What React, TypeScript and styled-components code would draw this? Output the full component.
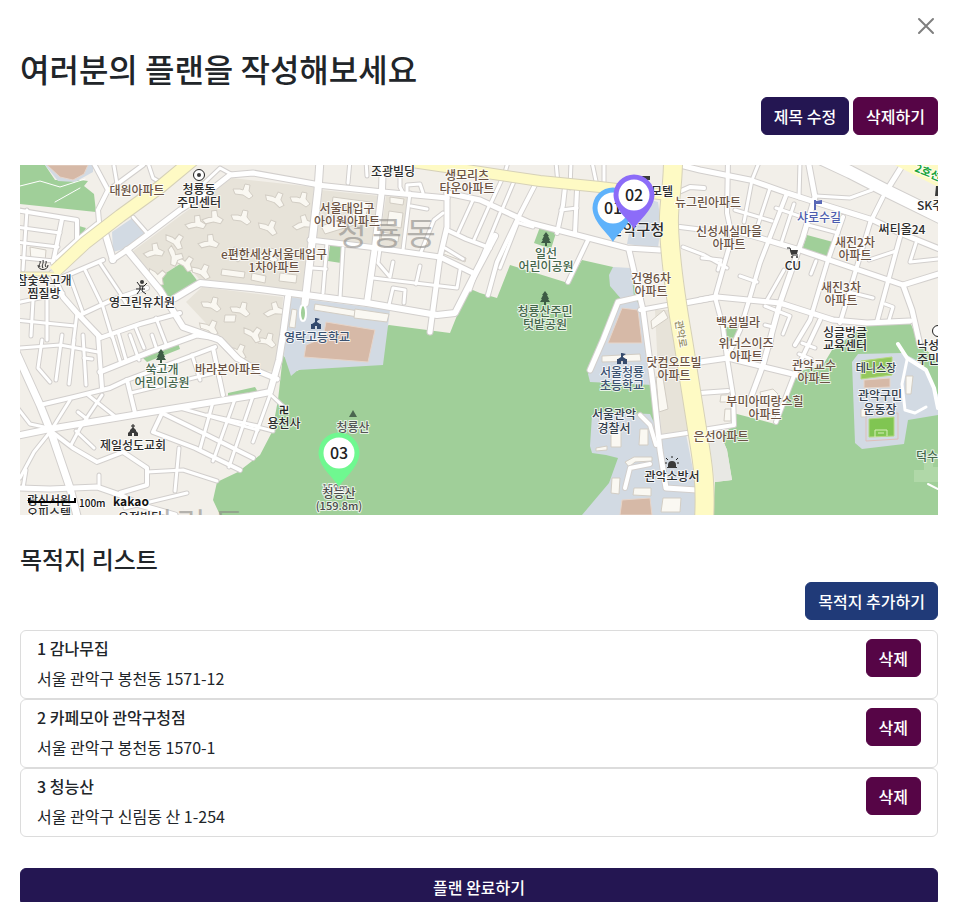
import React from "react";
import styled, { createGlobalStyle } from "styled-components";

const GlobalStyle = createGlobalStyle`
  *, *::before, *::after { box-sizing: border-box; }
  body {
    margin: 0;
    background: #fff;
    color: #212529;
    font-family: "Noto Sans CJK KR", "Noto Sans", sans-serif;
    font-size: 16px;
    line-height: 24px;
  }
  h1, h2, h3, p, ul { margin: 0; padding: 0; }
`;

const Page = styled.main`
  display: flex;
  flex-direction: column;
  padding: 14px 24px 20px 20px;
`;

const CloseBar = styled.div`
  display: flex;
  justify-content: flex-end;
  margin-bottom: 11px;
`;

const CloseButton = styled.button`
  display: grid;
  place-items: center;
  width: 24px;
  height: 24px;
  padding: 0;
  border: 0;
  background: transparent;
  color: #7f7f7f;
  cursor: pointer;
`;

const Title = styled.h1`
  margin-bottom: 2px;
  font-size: 32px;
  line-height: 38px;
  font-weight: 500;
`;

const Subtitle = styled.h2`
  margin-top: 29px;
  margin-bottom: 1px;
  font-size: 24px;
  line-height: 29px;
  font-weight: 500;
`;

const Actions = styled.div`
  display: flex;
  justify-content: flex-end;
  gap: 4px;
  margin-top: 8px;
`;

const tones = { navy: "#241652", wine: "#560546", blue: "#203a78" };

const Button = styled.button<{ $tone: keyof typeof tones }>`
  padding: 6px 12px;
  border: 1px solid ${(p) => tones[p.$tone]};
  border-radius: 6px;
  background: ${(p) => tones[p.$tone]};
  color: #fff;
  font: inherit;
  font-weight: 500;
  cursor: pointer;
`;

const MapFrame = styled.section`
  height: 350px;
  margin-top: 30px;
  overflow: hidden;
  background: #f2efe9;
`;

const MapSvg = styled.svg`
  display: block;
  width: 100%;
  height: 100%;
`;

const MapText = styled.text<{ $size?: number; $weight?: number }>`
  font-size: ${(p) => p.$size ?? 12}px;
  font-weight: ${(p) => p.$weight ?? 500};
  paint-order: stroke;
  stroke: rgba(255, 255, 255, 0.75);
  stroke-width: 2px;
  stroke-linejoin: round;
`;

const DistrictText = styled.text`
  font-size: 32px;
  fill: #8c8a86;
  opacity: 0.6;
`;

const PinText = styled.text`
  font-size: 16px;
  font-weight: 500;
  fill: #222;
`;

const PlaceList = styled.ul`
  margin-top: 10px;
  list-style: none;
`;

const PlaceItem = styled.li`
  display: flex;
  justify-content: space-between;
  align-items: flex-start;
  padding: 8px 16px;
  border: 1px solid #dcdcdc;
  border-radius: 6px;
`;

const PlaceName = styled.h3`
  margin-bottom: 8px;
  font-size: 16px;
  line-height: 19px;
  font-weight: 500;
`;

const FinishButton = styled(Button)`
  width: 100%;
  margin-top: 31px;
`;

const greens = [
  "20,165 45,165 55,180 80,180 88,181 84,186 94,194 96,212 20,204",
  "79,226 86,228 80,238 77,240",
  "152,282 183,262 199,283 175,298 163,298",
  "330,245 343,247 341,263 328,261",
  "143,358 178,343 180,349 147,362",
  "228,393 255,387 258,392 228,398",
  "807,235 833,242 828,257 802,250",
  "722,327 742,327 738,341 724,341",
  "540,227 556,233 551,249 534,243",
  "389,325 450,333 468,288 480,293 497,298 510,265 568,283 582,260 613,267 640,290 655,412 640,515 220,515 213,500 217,482 238,472 260,455 272,432 278,400 283,355 297,371",
  "733,413 775,424 797,372 823,365 832,350 865,325 910,322 920,345 938,360 938,515 713,515 715,482 732,480 727,450 721,435 735,425",
];

const grounds = [
  "45,165 93,165 93,172 75,182 58,181",
  "288,297 390,310 383,365 298,370 291,376 284,355",
  "613,267 631,268 634,297 643,310 647,340 653,385 632,384 590,382 588,374 604,340 614,306 622,300 610,286 609,275",
  "592,415 604,412 650,414 660,436 686,434 697,490 696,515 582,515 609,483 618,458 606,455 592,453 590,446",
  "852,362 858,354 903,353 920,362 938,395 938,415 908,420 904,444 862,449 855,443",
  "112,232 134,217 147,233 127,248 113,252",
  "636,196 658,202 661,224 658,248 627,244",
];

const courts = [
  "47,165 88,165 84,174 73,180 60,177",
  "326,322 375,330 368,362 304,357 306,345 323,338",
  "622,308 638,310 642,343 608,343",
  "622,500 650,498 652,515 620,515",
  "864,380 890,378 890,387 864,388",
];

const apartments = [
  "129,254 180,216 232,178 314,187 310,238 303,300 199,279 183,260 158,280",
  "186,302 202,287 283,297 279,372 252,370 218,336",
  "321,190 380,196 374,244 314,238",
  "386,196 410,198 403,248 379,245",
  "655,310 668,310 682,390 690,430 661,434",
];

type Road = [number, string];
const roads: Road[] = [
  [4, "92,160 108,190 98,210 99,222"],
  [3, "147,160 153,178 163,184"],
  [4, "109,190 143,165"],
  [3, "117,184 114,166"],
  [5, "320,185 253,173 230,175 207,193 180,210 147,235 127,250 112,260"],
  [6, "105,233 113,260"],
  [3, "133,217 147,233"],
  [3, "203,184 220,168 231,174"],
  [6, "127,250 160,290 183,327 220,340 237,358"],
  [6, "175,298 200,283 260,289 367,303 437,315 455,313 477,270 495,236"],
  [4, "16,210 77,220 77,240"],
  [3, "27,210 23,270"],
  [4, "62,219 53,263"],
  [3, "16,227 60,233"],
  [3, "16,242 58,247"],
  [3, "16,257 54,261"],
  [4, "57,258 77,240 97,224"],
  [5, "52,273 63,297 77,313 100,337"],
  [4, "63,277 103,260"],
  [3, "70,277 83,313"],
  [3, "85,270 103,307 112,337"],
  [3, "100,263 120,293 126,303"],
  [4, "80,315 112,300 147,288"],
  [4, "100,338 140,324 180,313"],
  [3, "16,303 63,293"],
  [3, "33,300 31,336"],
  [3, "47,298 47,340"],
  [3, "16,320 75,326"],
  [3, "77,313 73,345"],
  [3, "135,326 144,348"],
  [3, "156,318 166,344"],
  [3, "118,332 126,360"],
  [7, "320,160 318,190 310,260 305,303"],
  [5, "317,185 383,192 437,197 447,198"],
  [6, "383,160 382,190 375,247 367,303"],
  [3, "410,193 403,250"],
  [5, "447,193 447,227 440,257 430,332"],
  [5, "310,240 377,248 440,257 473,273"],
  [4, "447,230 466,239 490,248"],
  [3, "473,200 458,233"],
  [3, "489,206 474,240"],
  [3, "373,278 457,288 460,270"],
  [3, "380,249 378,263 390,277 393,262"],
  [3, "420,266 416,284"],
  [3, "343,248 340,298"],
  [3, "327,243 323,293"],
  [3, "312,268 326,269"],
  [3, "404,303 405,290 393,288 389,305"],
  [3, "350,160 348,183"],
  [3, "366,160 367,176"],
  [3, "407,193 407,185 420,184 423,193"],
  [3, "443,213 434,220 421,252"],
  [3, "445,248 463,259"],
  [3, "411,206 427,209"],
  [3, "400,166 400,187 403,193"],
  [5, "447,193 480,200 530,223 577,235 627,248 660,250"],
  [4, "565,187 563,205 557,233"],
  [4, "577,190 575,233"],
  [4, "536,183 517,220 497,262 488,295"],
  [3, "503,177 490,205"],
  [3, "515,179 502,210"],
  [3, "518,222 500,268"],
  [3, "500,213 480,262 470,290"],
  [4, "588,240 568,282"],
  [3, "561,210 577,208"],
  [3, "508,162 504,176"],
  [3, "556,162 558,184 570,188 571,162"],
  [3, "592,162 597,186"],
  [3, "604,162 604,187"],
  [3, "516,222 533,227"],
  [5, "629,250 643,310 653,385 660,450 666,488 697,490"],
  [5, "640,297 618,302 603,340 590,370"],
  [4, "640,310 667,305"],
  [5, "685,303 717,297"],
  [4, "660,437 687,433"],
  [4, "681,191 690,187 704,188"],
  [4, "680,227 704,230"],
  [3, "683,247 704,255 727,268"],
  [4, "640,415 650,425 656,445"],
  [4, "625,488 630,468 650,464"],
  [5, "680,165 700,170 750,180 787,193 815,202 873,220 900,233 942,250"],
  [4, "728,160 727,213 732,237 715,297 723,327 727,358"],
  [3, "760,160 752,180 744,222"],
  [4, "787,193 760,263 750,297 740,330 727,358"],
  [5, "808,160 815,197 803,237 780,303 763,365 750,400"],
  [4, "883,197 870,223"],
  [4, "843,217 828,260 810,320 795,345"],
  [4, "870,223 840,323"],
  [4, "900,237 877,322"],
  [5, "728,229 760,238 800,250 850,267 903,285 942,273"],
  [5, "700,300 717,297 780,303 833,320 867,323 910,321"],
  [5, "903,285 912,310 920,345"],
  [3, "784,270 767,300"],
  [3, "740,276 757,282"],
  [3, "816,196 850,198 872,190"],
  [3, "702,258 721,260 718,270"],
  [3, "735,210 772,221"],
  [3, "770,188 755,234"],
  [3, "794,204 781,244"],
  [3, "776,208 799,216"],
  [3, "808,225 838,233"],
  [3, "816,261 811,274"],
  [3, "885,304 893,307 889,320"],
  [3, "849,292 873,298"],
  [3, "869,260 896,251"],
  [3, "916,243 910,262 938,259"],
  [3, "800,162 799,198"],
  [5, "700,362 728,358 768,368 797,375"],
  [4, "727,358 733,395 734,425 703,430"],
  [4, "820,320 795,373 776,422"],
  [4, "700,393 728,391"],
  [3, "802,343 815,348"],
  [3, "799,354 811,359"],
  [3, "765,306 790,316 783,334"],
  [3, "765,325 773,327 771,346"],
  [7, "16,352 40,405 52,435 70,488 78,520"],
  [6, "16,436 55,428 133,415 213,402 250,396 270,392 279,360 283,335 288,297"],
  [4, "40,405 74,397 110,388 127,380 170,364 215,347"],
  [4, "98,335 102,388"],
  [5, "100,372 150,352 197,335 217,338 237,358 260,372 277,379"],
  [3, "62,335 56,380"],
  [3, "83,335 86,385"],
  [3, "42,340 38,368 50,382"],
  [3, "20,348 60,345 98,352"],
  [3, "74,340 69,384"],
  [3, "84,358 92,359"],
  [3, "112,335 121,364"],
  [3, "130,335 139,360"],
  [3, "152,335 157,350"],
  [4, "127,380 135,413"],
  [3, "102,395 80,428 71,445"],
  [3, "88,395 117,418"],
  [3, "70,400 50,432"],
  [4, "52,432 73,448 97,462 123,452"],
  [3, "76,431 94,448"],
  [3, "78,412 87,419"],
  [3, "16,406 30,424 44,427"],
  [4, "123,452 147,468 147,485 120,493"],
  [3, "147,472 183,470 217,481"],
  [5, "16,488 50,489 97,487 120,495 140,505 175,515"],
  [3, "50,432 34,452 20,478"],
  [3, "179,448 175,491"],
  [3, "125,508 187,493"],
  [3, "99,475 99,487"],
  [3, "26,470 23,488"],
  [4, "162,413 153,432 195,448 240,470"],
  [4, "162,413 205,434 253,458"],
  [3, "180,408 258,430"],
  [3, "213,402 200,449"],
  [3, "235,399 213,461"],
  [3, "253,396 229,467"],
  [3, "207,415 258,426"],
  [4, "213,348 223,395"],
  [3, "192,355 200,380"],
  [3, "131,393 218,372"],
  [3, "270,395 253,442"],
  [3, "250,425 273,431"],
  [3, "270,394 285,408"],
  [12, "820,158 850,172 885,190 942,218"],
  [5, "887,190 902,166"],
];

const pathsOnGreen: Road[] = [
  [1, "20,186 40,181 60,187 85,179"],
  [1, "55,202 80,188"],
  [4, "898,344 907,358 926,370 934,388 938,408"],
  [3, "907,360 902,384 905,410 915,413 926,407"],
  [2, "928,484 938,489"],
];

const blocks: [number, number, number][] = [
  [233, 186, 0], [231, 212, 0], [201, 217, -20], [197, 241, -20], [167, 232, 20], [177, 254, 20],
  [192, 264, 10], [266, 192, 10], [290, 194, 0], [259, 220, 10], [291, 224, -30], [222, 249, 0],
  [258, 250, 0], [142, 251, -25], [151, 266, 30], [201, 299, 0], [230, 304, 0], [262, 311, -30],
  [200, 320, 10], [256, 335, 0], [228, 344, 10], [184, 222, -20], [174, 244, 60], [245, 325, 20],
];

const plainBuildings = [
  "222,269 245,272 244,278 221,275", "252,273 266,276 265,283 251,280", "225,315 236,315 235,322 224,322",
  "280,273 297,275 296,283 279,281", "390,197 404,199 403,205 390,203", "389,211 403,213 401,228 387,225",
  "333,197 370,202 364,222 325,234 321,226 352,216 354,207 332,204", "382,232 399,235 398,242 381,239",
  "292,309 297,310 295,328 289,327", "315,304 365,312 364,318 314,310", "355,309 389,314 387,322 354,318",
  "602,356 640,354 641,361 602,362", "640,429 648,429 648,445 639,445",
  "599,419 606,419 605,428 599,428", "612,478 620,478 619,494 611,493", "634,488 651,488 651,496 633,495",
  "663,498 681,498 680,512 661,512", "656,377 663,378 668,409 659,412", "651,321 664,310 668,318 652,329",
  "30,247 46,250 45,262 31,260", "596,448 607,446 607,450 596,451", "611,430 621,430 621,447 611,447",
  "625,462 634,457 652,457 652,461 635,462 629,467",
  "721,395 730,395 729,402 720,402", "725,409 731,409 731,421 724,421", "760,392 773,389 778,394 777,400 762,401",
  "906,376 913,376 911,394 906,394", "861,409 866,409 866,417 861,417", "442,250 466,258 465,262 441,253",
];

type Label = { x: number; y: number; lines: string[]; c?: string; lh?: number; size?: number; start?: boolean };
const brown = "#6b5344";
const dark = "#2c2c2c";
const park = "#45664c";
const school = "#3b5270";
const labels: Label[] = [
  { x: 137, y: 195, lines: ["대원아파트"], c: brown },
  { x: 199, y: 194, lines: ["청룡동", "주민센터"] },
  { x: 393, y: 176, lines: ["조광빌딩"] },
  { x: 467, y: 180, lines: ["생모리츠", "타운아파트"], c: brown },
  { x: 347, y: 213, lines: ["서울대입구", "아이원아파트"], c: brown },
  { x: 274, y: 259, lines: ["e편한세상서울대입구", "1차아파트"], c: brown },
  { x: 44, y: 285, lines: ["참숯쑥고개", "찜질방"] },
  { x: 142, y: 307, lines: ["영그린유치원"] },
  { x: 317, y: 342, lines: ["영락고등학교"], c: school },
  { x: 162, y: 374, lines: ["쑥고개", "어린이공원"], c: park },
  { x: 228, y: 374, lines: ["바라본아파트"], c: brown },
  { x: 284, y: 428, lines: ["용천사"] },
  { x: 353, y: 432, lines: ["청룡산"], c: "#555" },
  { x: 133, y: 450, lines: ["제일성도교회"] },
  { x: 49, y: 505, lines: ["광신서원", "오피스텔"], lh: 13, size: 12 },
  { x: 140, y: 522, lines: ["유정빌딩"] },
  { x: 546, y: 258, lines: ["일선", "어린이공원"], c: park },
  { x: 545, y: 316, lines: ["청룡산주민", "텃밭공원"], c: park },
  { x: 651, y: 283, lines: ["건영6차", "아파트"], c: brown },
  { x: 651, y: 196, lines: ["모텔"], start: true },
  { x: 622, y: 377, lines: ["서울청룡", "초등학교"], c: school },
  { x: 614, y: 419, lines: ["서울관악", "경찰서"], c: "#34404c", lh: 14 },
  { x: 674, y: 367, lines: ["닷컴오뜨빌", "아파트"], c: brown },
  { x: 672, y: 481, lines: ["관악소방서"] },
  { x: 721, y: 441, lines: ["은선아파트"], c: brown },
  { x: 708, y: 207, lines: ["뉴그린아파트"], c: brown },
  { x: 729, y: 236, lines: ["신성새실마을", "아파트"], c: brown },
  { x: 819, y: 222, lines: ["샤로수길"], c: "#4c5cae" },
  { x: 793, y: 270, lines: ["CU"] },
  { x: 855, y: 247, lines: ["새진2차", "아파트"], c: brown },
  { x: 902, y: 234, lines: ["써티올24"] },
  { x: 841, y: 292, lines: ["새진3차", "아파트"], c: brown },
  { x: 738, y: 327, lines: ["백설빌라"], c: brown },
  { x: 746, y: 348, lines: ["위너스이즈", "아파트"], c: brown },
  { x: 845, y: 337, lines: ["싱글벙글", "교육센터"] },
  { x: 814, y: 370, lines: ["관악교수", "아파트"], c: brown },
  { x: 765, y: 406, lines: ["부미아띠랑스힐", "아파트"], c: brown },
  { x: 876, y: 372, lines: ["테니스장"], size: 11, c: "#34404c" },
  { x: 880, y: 400, lines: ["관악구민", "운동장"], lh: 14, c: "#34404c" },
  { x: 917, y: 210, lines: ["SK주유소"], start: true },
  { x: 917, y: 350, lines: ["낙성대동", "주민센터"], start: true, lh: 14 },
  { x: 916, y: 461, lines: ["덕수공원"], start: true, c: "#45664c" },
  { x: 335, y: 492, lines: ["159m"], size: 10, c: "#777" },
  { x: 339, y: 498, lines: ["청능산"], c: "#4a4a4a" },
  { x: 339, y: 510, lines: ["(159.8m)"], size: 11, c: "#4a4a4a" },
];

function Roads({ items }: { items: Road[] }) {
  return (
    <g fill="none" strokeLinejoin="round" strokeLinecap="round">
      <g stroke="#d2cfcd">
        {items.map(([w, p], i) => <polyline key={i} points={p} strokeWidth={w + 2} />)}
      </g>
      <g stroke="#fff">
        {items.map(([w, p], i) => <polyline key={i} points={p} strokeWidth={w} />)}
      </g>
    </g>
  );
}

function Polygons({ items, fill, stroke }: { items: string[]; fill: string; stroke?: string }) {
  return <g fill={fill} stroke={stroke}>{items.map((p) => <polygon key={p} points={p} />)}</g>;
}

function Pin({ x, y, color, label }: { x: number; y: number; color: string; label: string }) {
  return (
    <g transform={`translate(${x} ${y})`}>
      <path d="M0 34C-3 27-20 15-20.500 0A20.500 20.500 0 0 1 20.500 0C20 15 3 27 0 34Z" fill={color} />
      <circle r="15.500" fill="#fff" />
      <PinText y="6" textAnchor="middle">{label}</PinText>
    </g>
  );
}

function Tree({ x, y }: { x: number; y: number }) {
  return (
    <path transform={`translate(${x} ${y})`} fill="#3d5b45"
      d="M0-6 3-2H2L4 2H3L5 5H1V8H-1V5H-5L-3 2H-4L-2-2H-3Z" />
  );
}

function School({ x, y }: { x: number; y: number }) {
  return (
    <path transform={`translate(${x} ${y})`} fill="#344a6d" d="M0-6 4-5 1-3V-2L4 0H5V5H1V2H-1V5H-5V0H-4L-1-2V-6Z" />
  );
}

function TownMap() {
  return (
    <MapFrame aria-label="목적지 지도">
      <MapSvg viewBox="20 165 918 350" preserveAspectRatio="xMidYMid slice" role="img" aria-label="관악구 지도">
        <rect x="20" y="165" width="918" height="350" fill="#f2efe9" />
        <Polygons items={apartments} fill="#e7e3d9" />
        <Polygons items={greens} fill="#a0cf99" />
        <Polygons items={grounds} fill="#d2dae3" />
        <Polygons items={courts} fill="#d6b9a7" stroke="#e6d5ca" />
        <polygon points="715,482 732,480 727,450 721,437 709,440" fill="#e8e8e4" />
        <path d="M924 460h9v7h5v15h-24v-12h10Z" fill="#b0d8a8" />
        <g stroke="#b5d981">
          <path d="M861 361 892 357V375L861 379Z" fill="#94c85e" />
          <path d="M869 419 894 417V436L869 437Z" fill="#80c552" />
          <path d="M875 437v-7h12v6M878 433h6" fill="none" stroke="#d6efb8" />
          <path d="M866 415 898 413V439L866 441Z" fill="none" stroke="#dfbfb9" />
        </g>
        <g fill="#faf8f2" stroke="#d2cdc4">
          {blocks.map(([x, y, r]) => (
            <path key={`${x}-${y}`} transform={`translate(${x} ${y}) rotate(${r})`}
              d="M0 3H7L10 4 12-2 17-1 16 5 20 10 16 13 10 9 2 8Z" />
          ))}
          {plainBuildings.map((p) => <polygon key={p} points={p} />)}
        </g>
        <Roads items={roads} />
        <g fill="none" stroke="#fff" strokeLinecap="round" strokeLinejoin="round">
          {pathsOnGreen.map(([w, p]) => <polyline key={p} points={p} strokeWidth={w} />)}
        </g>
        <ellipse cx="303" cy="313" rx="3" ry="8" fill="#a0cf99" stroke="#fff" strokeWidth="2" />
        <g fill="none" strokeLinejoin="round">
          <g stroke="#d6d1b8">
            <path d="M412 162 480 172 540 181 600 187 668 195" strokeWidth="12" />
            <path d="M195 158 160 187 120 216 85 243 56 270" strokeWidth="14" />
            <path d="M20 274H54" strokeWidth="5" />
            <path d="M673 160C673 190 668 205 669 225 670 260 676 300 683 340L698 435C703 465 706 485 704 520" strokeWidth="20" />
          </g>
          <g stroke="#fefac4">
            <path d="M412 162 480 172 540 181 600 187 668 195" strokeWidth="10" />
            <path d="M195 158 160 187 120 216 85 243 54 272" strokeWidth="12" />
            <path d="M20 274H56" strokeWidth="3" />
            <path d="M673 160C673 190 668 205 669 225 670 260 676 300 683 340L698 435C703 465 706 485 704 520" strokeWidth="18" />
          </g>
        </g>
        <polygon points="895,165 938,165 938,187" fill="#fefac4" />

        {[["청", 352], ["룡", 387], ["동", 421]].map(([t, x]) => (
          <DistrictText key={t} x={x} y="245" textAnchor="middle">{t}</DistrictText>
        ))}
        {[["신", 158], ["림", 191], ["동", 229]].map(([t, x]) => (
          <DistrictText key={t} x={x} y="536" textAnchor="middle">{t}</DistrictText>
        ))}

        <Tree x={546} y={238} />
        <Tree x={545} y={297} />
        <Tree x={161} y={355} />
        <School x={316} y={324} />
        <School x={622} y={359} />
        <g fill="none" stroke="#222">
          <circle cx="199" cy="175" r="5.500" fill="#fff" />
          <circle cx="938" cy="331" r="5.500" fill="#fff" />
          <path d="M38 265c0 6 10 6 10 0M40 267c-2-3 1-3 0-6M43 268c-2-3 1-4 0-8M46 267c-2-3 1-3 0-6" />
          <path d="M137 282l3 4h4l3-3M140 286v4l-3 4M143 286l-1 5 4 3M136 289h9" />
          <path d="M787 248h3l2 7h6" />
          <path d="M666 458l2 2M665 463h2M672 456v2M678 458l-2 2M679 463h-2" />
          <path d="M133 424v5M131 426h4" />
        </g>
        <g fill="#3a3a3a">
          <circle cx="199" cy="175" r="2" />
          <circle cx="142" cy="282" r="2" />
          <circle cx="792" cy="257" r="1" />
          <circle cx="797" cy="257" r="1" />
          <path d="M790 250h8l-1 4h-6Z" />
          <path d="M133 427 136 430V431L138 433V436H134V433H132V436H128V433L130 431V430Z" />
          <path d="M668 467v-2a4 4 0 0 1 8 0v2h1v1h-10v-1Z" />
          <path d="M353 410 357 417H349Z" fill="#4b6650" />
          <path d="M936 186h4v10h-5Z" />
          <path d="M640 176h10v4h-8Z" />
          <path d="M814 200h2v1l6-1v4h-6v6h-2Z" fill="#5968b6" />
        </g>
        <MapText x="284" y="414" textAnchor="middle" $size={10} $weight={700} fill="#222">卍</MapText>

        {labels.map((l) => (
          <MapText key={l.lines.join() + l.x} y={l.y} $size={l.size} fill={l.c ?? dark} textAnchor={l.start ? "start" : "middle"}>
            {l.lines.map((t, i) => (
              <tspan key={t} x={l.x} dy={i ? l.lh ?? 13 : 0}>{t}</tspan>
            ))}
          </MapText>
        ))}
        <MapText x="609" y="235" $size={15} fill={dark}>관악구청</MapText>
        <MapText transform="translate(675 321) rotate(80)" $size={10} fill="#8f8862">관악로</MapText>
        <MapText transform="translate(914 171) rotate(22)" $size={11} $weight={700} fill="#18a43b">2호선</MapText>

        <path d="M29 498v4h46v-4" fill="none" stroke="#000" strokeWidth="2" />
        <MapText x="79" y="507" $size={10} fill="#111">100m</MapText>
        <MapText x="113" y="506" $size={12} $weight={700} fill="#111">kakao</MapText>

        <Pin x={613} y={208} color="#5fb2fb" label="01" />
        <Pin x={634} y={195} color="#8c6cf8" label="02" />
        <Pin x={339} y={453} color="#6ff890" label="03" />
      </MapSvg>
    </MapFrame>
  );
}

const places = [
  { name: "감나무집", address: "서울 관악구 봉천동 1571-12" },
  { name: "카페모아 관악구청점", address: "서울 관악구 봉천동 1570-1" },
  { name: "청능산", address: "서울 관악구 신림동 산 1-254" },
];

export default function App() {
  return (
    <>
      <GlobalStyle />
      <Page>
        <CloseBar>
          <CloseButton type="button" aria-label="닫기">
            <svg width="18" height="18" viewBox="0 0 18 18" fill="none" stroke="currentColor" strokeWidth="2" strokeLinecap="round">
              <path d="M2 2 16 16M16 2 2 16" />
            </svg>
          </CloseButton>
        </CloseBar>
        <Title>여러분의 플랜을 작성해보세요</Title>
        <Actions>
          <Button type="button" $tone="navy">제목 수정</Button>
          <Button type="button" $tone="wine">삭제하기</Button>
        </Actions>
        <TownMap />
        <Subtitle>목적지 리스트</Subtitle>
        <Actions>
          <Button type="button" $tone="blue">목적지 추가하기</Button>
        </Actions>
        <PlaceList>
          {places.map((p, i) => (
            <PlaceItem key={p.name}>
              <div>
                <PlaceName>{i + 1} {p.name}</PlaceName>
                <p>{p.address}</p>
              </div>
              <Button type="button" $tone="wine" aria-label={`${p.name} 삭제`}>삭제</Button>
            </PlaceItem>
          ))}
        </PlaceList>
        <FinishButton type="button" $tone="navy">플랜 완료하기</FinishButton>
      </Page>
    </>
  );
}
